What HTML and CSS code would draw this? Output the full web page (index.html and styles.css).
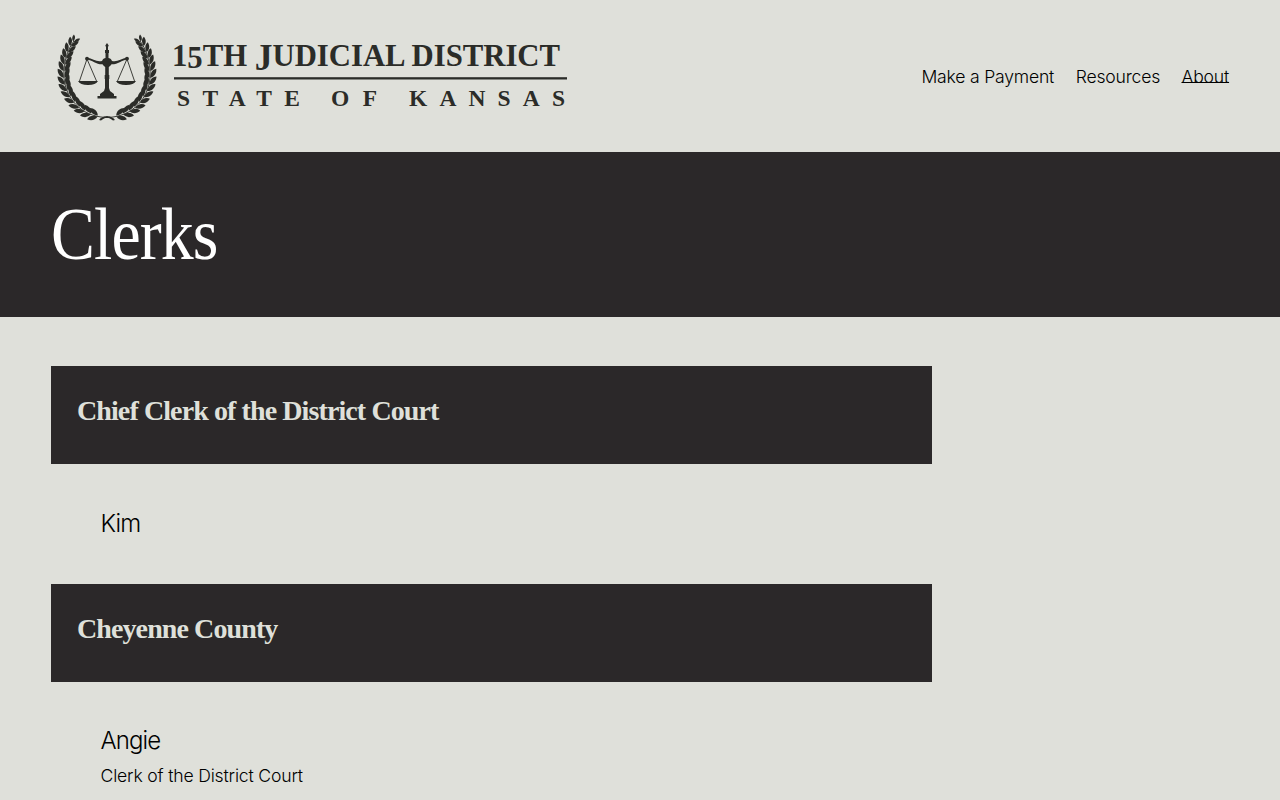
FILE: index.html
```html
<!DOCTYPE html>
<html lang="en">
<head>
<meta charset="utf-8">
<title>Clerks</title>
<link rel="stylesheet" href="styles.css">
</head>
<body>
<header class="header">
  <svg class="logo" viewBox="51 10 523 132" role="img" aria-label="15th Judicial District, State of Kansas">
    <defs>
      <g id="leaf">
        <path d="M-.5-.5C-2-5-6-6.500-10-5.800C-9-1.500-5 0-.5-.5Z"/>
        <path d="M-.5 .5C-2 5-6 6.500-10 5.800C-9 1.500-5 0-.5 .5Z"/>
      </g>
      <g id="branch">
        <path d="M101 117C78 114 62 94 64 70C65 58 68 49 74 41M101 117C104 117.500 110 116.500 114 119.500" fill="none" stroke="#2b2c28" stroke-width=".9"/>
        <path d="M106 116.500Q111 115.500 115 120L113 120.600Q110 117.500 106 117.500Z"/>
        <use href="#leaf" transform="translate(98.200 116.100) rotate(14)"/>
        <use href="#leaf" transform="translate(91.500 114.100) rotate(23)"/>
        <use href="#leaf" transform="translate(85.300 111.200) rotate(32)"/>
        <use href="#leaf" transform="translate(79.800 107.400) rotate(41)"/>
        <use href="#leaf" transform="translate(74.900 102.600) rotate(50)"/>
        <use href="#leaf" transform="translate(70.800 97.200) rotate(59)"/>
        <use href="#leaf" transform="translate(67.600 91.300) rotate(68)"/>
        <use href="#leaf" transform="translate(65.400 85) rotate(77)"/>
        <use href="#leaf" transform="translate(64.200 78.400) rotate(86)"/>
        <use href="#leaf" transform="translate(64 71.600) rotate(94)"/>
        <use href="#leaf" transform="translate(64.500 65) rotate(101) scale(.95)"/>
        <use href="#leaf" transform="translate(65.600 58.700) rotate(107) scale(.93)"/>
        <use href="#leaf" transform="translate(67.500 52.600) rotate(113) scale(.9)"/>
        <use href="#leaf" transform="translate(70.300 46.600) rotate(119) scale(.85)"/>
        <use href="#leaf" transform="translate(73.300 42) rotate(125) scale(.65)"/>
      </g>
    </defs>
    <g fill="#2b2c28">
      <use href="#branch"/>
      <use href="#branch" transform="translate(214 0) scale(-1 1)"/>
      <path d="M106 47L105.300 45.500L107 43L108.700 45.500L108 47V50H109V53H108.500V58C111 58.500 111.500 60 112 61C117 62.500 121 59 127 57.600L128 59C121 60.500 118 64.500 111.500 64.300C110.500 66 109.500 66.500 108.800 67V75H109.300V79H109V88L110 91L114 94V96H116.500V98.500H97.500V96H100V94L104 91L105 88V79H104.700V75H105.200V67C104.500 66.500 103.500 66 102.500 64.300C96 64.500 93 60.500 86 59L87 57.600C93 59 97 62.500 102 61C102.500 60 103 58.500 105.500 58V53H105V50H106Z"/>
      <circle cx="87" cy="58.700" r="1.900"/><circle cx="127" cy="58.700" r="1.900"/>
      <path d="M78 81H98Q96 85 88 85T78 81ZM116 81H136Q134 85 126 85T116 81Z"/>
      <path d="M87 59L79.500 81M87 59L96.500 81M127 59L117.500 81M127 59L134.500 81" fill="none" stroke="#2b2c28" stroke-width=".9"/>
      <rect x="174" y="77.200" width="393" height="2.300"/>
    </g>
    <g class="logo-text">
      <text x="172" y="66" font-size="32" textLength="388" lengthAdjust="spacingAndGlyphs">1<tspan dy="2">5</tspan><tspan dy="-2">TH </tspan><tspan dy="4" font-size="37">J</tspan><tspan dy="-4">UDICIAL DISTRICT</tspan></text>
      <text x="177" y="106.300" font-size="23.500" textLength="123">STATE</text>
      <text x="331" y="106.300" font-size="23.500" textLength="46">OF</text>
      <text x="409" y="106.300" font-size="23.500" textLength="156">KANSAS</text>
    </g>
  </svg>
  <nav class="nav">
    <a class="nav-link">Make a Payment</a>
    <a class="nav-link">Resources</a>
    <a class="nav-link current">About</a>
  </nav>
</header>
<section class="banner"><h1 class="title">Clerks</h1></section>
<main class="content">
  <h2 class="heading">Chief Clerk of the District Court</h2>
  <div class="entry entry-short"><p class="name">Kim</p></div>
  <h2 class="heading">Cheyenne County</h2>
  <div class="entry"><p class="name">Angie</p><p class="role">Clerk of the District Court</p></div>
</main>
</body>
</html>
```
FILE: styles.css
```css
* { box-sizing: border-box; }
body {
  margin: 0;
  height: 800px;
  overflow: hidden;
  background: #dfe0da;
  color: #000;
  font-family: Inter, "Liberation Sans", sans-serif;
  font-weight: 300;
}
h1, h2, p { margin: 0; }
.header {
  height: 152px;
  padding: 0 51px;
  display: flex;
  align-items: center;
  justify-content: space-between;
}
.logo { width: 523px; height: 132px; overflow: visible; }
.logo-text {
  fill: #2b2c28;
  font-family: "Liberation Serif", serif;
  font-weight: 700;
}
.nav { display: flex; gap: 21.5px; padding-top: 2px; }
.nav-link { font-size: 17.6px; line-height: 28px; letter-spacing: -0.2px; }
.current { text-decoration: underline; text-decoration-thickness: 1px; text-underline-offset: -1px; text-decoration-skip-ink: none; }
.banner {
  height: 165px;
  padding: 0 51px 2px;
  display: flex;
  align-items: center;
  background: #2b2829;
}
.title {
  color: #fff;
  font: 400 74px/86px "Liberation Serif", serif;
  letter-spacing: -1px;
  transform: scaleX(.89);
  transform-origin: left;
}
.content { width: 932px; padding: 49px 0 0 51px; }
.heading {
  height: 98px;
  padding: 27px 26px;
  background: #2b2829;
  color: #dfe0da;
  font: 700 28px/36px "Liberation Serif", serif;
  letter-spacing: -0.9px;
}
.entry { padding: 40px 49.5px 0; }
.entry-short { height: 120px; padding-top: 41px; }
.name { font-size: 24px; line-height: 38px; letter-spacing: -0.9px; }
.role { font-size: 17.6px; line-height: 31px; letter-spacing: -0.18px; }
```
